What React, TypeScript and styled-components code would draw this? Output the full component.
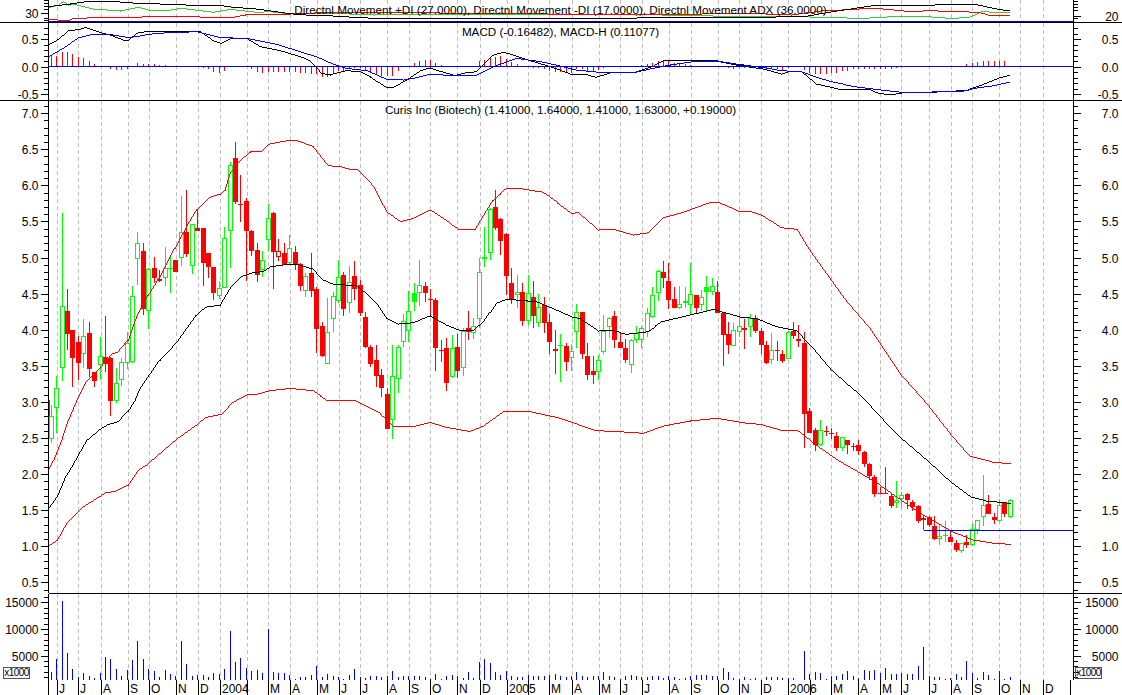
import React from "react";
import styled, { createGlobalStyle } from "styled-components";

type Kind = "r" | "g" | "G" | "o";
type Row = [number, number, number, number, Kind];
type Pt = [number, number];
type Tick = { y: number; major: boolean; label?: string };

const X0 = 51.3;
const STEP = 5.418;
const col = (x: number) => Math.round(x - 0.5) + 0.5;
const xOf = (i: number) => col(X0 + STEP * i);

/* Samples are stored in thirds of a pixel, relative to a base line */
const block = (y0: number, rows: Row[]): Row[] =>
  rows.map(([h, t, b, l, k]) => [y0 + h / 3, y0 + t / 3, y0 + b / 3, y0 + l / 3, k]);

const candles: Row[] = [
  ...block(180, [
    [675, 708, 778, 790, "g"], [588, 625, 685, 760, "g"], [100, 377, 565, 603, "g"], [328, 393, 461, 510, "r"],
    [450, 451, 533, 620, "r"], [468, 487, 548, 600, "r"], [418, 467, 523, 565, "g"], [427, 460, 566, 590, "r"],
    [576, 576, 602, 620, "r"], [472, 529, 555, 600, "g"], [408, 531, 551, 575, "r"], [530, 534, 662, 708, "r"],
    [565, 610, 662, 668, "g"], [535, 547, 601, 617, "g"], [455, 490, 549, 567, "g"], [318, 349, 547, 549, "g"],
    [156, 188, 238, 316, "g"], [190, 213, 386, 405, "r"], [265, 268, 394, 447, "g"], [232, 265, 293, 310, "r"],
    [270, 297, 302, 305, "r"], [201, 265, 295, 317, "g"], [225, 265, 267, 338, "G"], [240, 241, 275, 275, "r"],
    [48, 157, 235, 258, "g"], [30, 157, 221, 232, "r"], [133, 133, 259, 282, "g"], [88, 145, 152, 152, "r"],
    [145, 145, 248, 318, "r"], [220, 220, 261, 293, "r"], [260, 261, 338, 360, "r"], [303, 325, 347, 358, "g"],
    [142, 173, 325, 325, "g"], [-54, -45, 154, 263, "g"], [-114, -66, 65, 72, "r"], [-15, 72, 75, 125, "r"],
    [55, 63, 152, 302, "r"], [150, 153, 212, 228, "r"], [190, 210, 285, 305, "r"], [213, 241, 271, 292, "g"],
    [72, 115, 181, 212, "g"], [96, 100, 215, 326, "r"], [178, 214, 232, 243, "o"], [190, 220, 254, 254, "r"],
    [165, 205, 250, 255, "g"], [197, 216, 254, 270, "r"], [248, 252, 318, 332, "r"], [280, 287, 334, 350, "g"],
    [220, 279, 333, 350, "r"], [320, 327, 446, 520, "r"], [425, 438, 528, 530, "r"], [354, 457, 551, 553, "g"],
    [337, 349, 416, 455, "g"], [240, 292, 362, 370, "g"], [275, 285, 386, 408, "r"], [258, 307, 368, 398, "g"],
    [243, 288, 326, 360, "r"], [300, 315, 398, 408, "r"], [396, 412, 500, 505, "r"], [495, 501, 552, 560, "r"],
    [495, 540, 588, 620, "r"], [568, 585, 624, 652, "r"], [625, 642, 746, 746, "r"], [495, 589, 721, 778, "g"],
    [495, 502, 598, 638, "g"], [403, 424, 485, 500, "g"], [333, 394, 454, 487, "g"], [310, 340, 365, 392, "G"],
    [240, 316, 338, 377, "g"], [305, 318, 338, 365, "r"], [328, 357, 359, 405, "r"], [355, 360, 503, 572, "r"],
    [480, 510, 512, 545, "r"], [475, 504, 608, 632, "r"], [465, 505, 590, 595, "g"], [462, 501, 572, 595, "r"],
    [445, 454, 565, 588, "g"], [393, 445, 457, 480, "r"], [415, 439, 458, 477, "g"], [235, 275, 418, 445, "g"],
    [141, 232, 238, 262, "G"], [85, 88, 218, 240, "g"], [30, 82, 143, 150, "r"], [115, 117, 182, 225, "r"],
    [160, 163, 287, 345, "r"], [265, 310, 360, 372, "r"], [285, 337, 344, 385, "g"], [308, 337, 422, 437, "r"],
    [285, 340, 423, 435, "g"], [303, 351, 407, 443, "r"], [343, 382, 428, 440, "g"], [350, 375, 430, 460, "r"],
    [403, 426, 485, 522, "r"], [450, 508, 512, 582, "r"], [462, 495, 497, 605, "G"], [490, 498, 545, 573, "r"],
    [492, 514, 535, 573, "g"], [372, 397, 457, 503, "g"], [396, 396, 521, 538, "r"], [489, 528, 584, 600, "r"],
    [528, 573, 584, 613, "r"], [525, 541, 575, 600, "g"], [405, 452, 516, 522, "g"], [410, 415, 440, 473, "g"],
    [393, 408, 480, 505, "r"], [455, 486, 504, 504, "r"], [478, 503, 540, 548, "r"], [478, 481, 554, 578, "g"],
    [438, 458, 480, 490, "g"], [438, 445, 481, 503, "g"], [385, 400, 455, 470, "g"], [321, 346, 412, 414, "g"],
    [270, 274, 339, 362, "g"], [243, 276, 294, 324, "r"], [250, 303, 360, 386, "r"], [320, 357, 384, 384, "r"],
    [318, 371, 385, 387, "g"], [320, 362, 370, 385, "g"], [248, 343, 374, 403, "g"], [345, 346, 384, 403, "r"],
    [330, 352, 376, 393, "g"], [288, 322, 335, 395, "G"], [293, 319, 337, 345, "g"], [303, 336, 398, 400, "r"],
    [395, 398, 464, 558, "r"], [427, 463, 494, 522, "r"], [428, 451, 497, 497, "g"], [403, 439, 457, 470, "g"],
    [418, 443, 451, 507, "o"], [403, 415, 441, 470, "g"], [405, 417, 453, 458, "r"],
  ]),
  ...block(300, [
    [85, 93, 134, 162, "r"], [123, 135, 190, 192, "r"], [99, 151, 181, 191, "g"], [124, 150, 152, 182, "r"],
    [150, 162, 183, 188, "r"], [93, 96, 176, 178, "g"], [67, 93, 108, 117, "r"], [75, 118, 122, 140, "r"],
    [97, 129, 342, 443, "r"], [325, 333, 398, 400, "r"], [385, 390, 436, 452, "r"], [360, 391, 436, 438, "g"],
    [378, 394, 396, 408, "r"], [383, 399, 401, 418, "r"], [396, 408, 444, 452, "r"], [410, 412, 445, 453, "g"],
    [420, 420, 434, 462, "r"], [430, 438, 441, 452, "r"], [420, 435, 452, 465, "r"], [454, 456, 493, 502, "r"],
    [488, 492, 528, 540, "r"], [525, 531, 582, 590, "r"], [560, 578, 581, 582, "r"], [501, 578, 581, 582, "r"],
    [578, 588, 617, 623, "r"], [544, 599, 610, 625, "g"], [575, 586, 596, 625, "g"], [580, 582, 600, 628, "r"],
    [600, 606, 620, 632, "r"], [615, 618, 664, 670, "r"], [645, 654, 661, 690, "r"], [648, 651, 675, 682, "r"],
    [648, 678, 716, 720, "r"], [675, 709, 718, 735, "g"], [662, 706, 709, 725, "G"], [690, 711, 725, 725, "r"],
    [720, 729, 750, 756, "r"], [728, 730, 752, 758, "g"], [705, 725, 735, 745, "r"], [672, 686, 736, 738, "g"],
    [660, 661, 691, 703, "g"], [525, 616, 652, 678, "g"], [585, 612, 641, 642, "r"], [640, 651, 659, 671, "r"],
    [598, 616, 662, 665, "g"], [605, 610, 642, 650, "r"], [598, 601, 652, 654, "g"],
  ]),
];

const upperBand: Pt[] = [[48.7,469],[54,459],[62,439],[68.3,420],[78.3,397],[85,383],[93.3,375],[111.7,354],[118.3,351.7],[128.3,340],[136.7,316.7],[148.3,295],[160,276.7],[175,248],[188.3,223.3],[197.3,209],[210,197],[220,194],[225,190],[230,173],[240,160],[250,152],[261.7,151],[268.3,144.3],[278.3,142.3],[290,140.3],[296.7,140.3],[313,146.7],[328,165.7],[340,166.7],[350,169.3],[358.3,170],[368,180],[374,187.7],[386.7,211.7],[400,221.7],[413,218.3],[430,210],[450,223.3],[458.3,229.3],[475,229.3],[493.3,200],[506.7,188.3],[516.7,188],[543.3,192.3],[571.7,213.3],[578.3,212.7],[598.3,230],[613.3,229.3],[633.3,235],[648.3,232.7],[663.3,217.7],[683.3,212.3],[710,202.3],[718.3,202.3],[738.3,211],[750,211],[761.3,215],[781.3,227.7],[797.3,229.3],[810,250],[846,300],[870,328],[900,373],[926.7,403],[951.7,435],[970,456],[993.3,462.3],[1010,463.7]];

const middleBand: Pt[] = [[48.7,508.7],[57.3,496.7],[66.7,475],[72.7,465],[76,459.3],[86.7,440.7],[101.7,428.3],[108.3,424.3],[118.3,421.7],[128.3,411],[135,400],[140,388.3],[160,360],[176.7,342.3],[196.7,315],[205,307.3],[220,305],[230,288.3],[241.7,276.7],[253.3,272.3],[263.3,271.7],[270,266.7],[280,265.3],[296.7,264],[313.3,269.3],[323.3,280],[333.3,284.3],[356.7,285.7],[366.7,293.3],[376.7,303.3],[386.7,318.3],[398.3,324],[413.3,322.7],[430,315.7],[446.7,325],[460,330.7],[473.3,330],[483.3,321.7],[496.7,303.3],[506.7,299.3],[536.7,301.7],[556.7,310],[573.3,317.7],[580,318.3],[598.3,331],[613.3,330.7],[626.7,334.3],[648.3,331.7],[661.7,321.7],[683.3,316.7],[713.3,309.3],[723.3,312.3],[741.7,317.3],[756.7,318.5],[776.7,326.7],[796.7,330.7],[810,345],[830,368.3],[848.3,385],[860,395],[886.7,423.3],[903.3,440],[930,463.3],[950,481.7],[970,496.7],[986.7,501],[1010,503.3]];

const lowerBand: Pt[] = [[48.7,546.3],[57.3,540],[66.7,523.3],[83.3,506.7],[106,492.3],[115,491.7],[128.3,485],[138.3,470],[146.7,465],[176.7,439.3],[196.7,425],[205,417.7],[221.7,414.3],[231.7,403.3],[246.7,395],[256.7,394.3],[270,390.7],[290,388.3],[313.3,390.7],[326.7,400],[356.7,401],[380,413.3],[393.3,426],[413.3,426.7],[430,422.3],[446.7,427.3],[470,431.7],[483.3,426],[503.3,411.7],[516.7,411],[530,411.7],[560,418.3],[596.7,430.7],[620,431.7],[643.3,433.3],[663.3,426],[690,421],[716.7,418.3],[746.7,423.3],[760,424.3],[780,430],[798.3,431],[820,448.3],[840,461.7],[860,473.3],[880,485],[903.3,501.7],[923.3,515],[950,530.7],[973.3,540],[993.3,543.3],[1010,544.3]];

const macdLine: Pt[] = [[48.7,45],[58,39.3],[68,30.7],[80,29.3],[85,27.3],[100,32.7],[113,36],[123.3,40],[128.3,40],[138.3,32.3],[148.3,31.7],[200,31.7],[213,40.7],[221.7,43.3],[231.7,38.3],[246.7,38.3],[260,46.7],[280,50.7],[300,56.7],[310,61],[321.7,73.3],[330,75],[346.7,70.7],[360,71.7],[370,76.7],[386.7,87.3],[393.3,87.3],[406.7,80],[420,70.7],[430,67.7],[441.7,71.7],[455,75.7],[466.7,72.7],[476.7,71.7],[493.3,55],[503.3,52.3],[513.3,55],[530,60.7],[550,66.7],[570,74],[583.3,74],[596.7,77.3],[610,72.7],[633.3,72.7],[653.3,66],[663.3,60.7],[713.3,60],[720,61.7],[736.7,65],[748,66.7],[764.7,69.3],[781.3,74],[788,71.7],[801.3,71.7],[816.3,84],[838,89],[868,89],[878,93.3],[891.3,94.7],[904.7,92.7],[920,92.2],[945,91.9],[968,90],[981.3,85],[998,78.3],[1009.7,75.3]];

const macdSignal: Pt[] = [[48.7,56.7],[63.3,48.3],[78.3,37.7],[93.3,34.3],[110,34.3],[128.3,37.7],[156.7,33.3],[196.7,31.7],[220,37.7],[246.7,38.3],[276.7,44.3],[300,51.7],[316.7,56.7],[333.3,64.3],[346.7,68.3],[366.7,70.7],[370,71.7],[386.7,79.3],[403.3,80],[413.3,78.3],[430,74],[443.3,75],[476.7,75],[493.3,66.7],[516.7,58.3],[540,61.7],[560,66],[576.7,70],[603.3,72.7],[633.3,72.7],[653.3,68.3],[670,65],[693.3,61.7],[716.7,61],[736.7,64],[748,65.7],[768,68.3],[781.3,70.7],[801.3,71.7],[816.3,77.3],[831.3,81.7],[854.7,86.7],[881.3,90],[901.3,92.3],[961.3,91.7],[974.7,88.3],[991.3,86],[1009.7,82.3]];

const histogram: number[] = [
  10.7,10.7,15,15,12.7,10,8.3,5.7,2.7,1,0,-2.3,-3.3,-3.3,-2.3,0,4,2.7,2.7,2.7,1.7,1.7,.7,0,.7,0,0,-.7,-1.3,-2.3,
  -5.3,-6,-4.3,0,0,0,-.7,-2.3,-5,-6,-5.3,-5.3,-5.3,-5.3,-5.3,-5.3,-6.3,-6.3,-7.3,-7.7,-10,-10,-7.3,-4,-4,-2.3,-1,-1.7,-3.3,
  -4.3,-7.3,-9.3,-9.3,-9.3,-4,0,.7,3.3,5.7,6.7,6.7,4,1.7,.7,0,0,0,0,0,5.7,6.7,9.3,10,10.7,7.3,5,2.3,.7,-.3,-1,-1.7,-2.3,-4,-5,-5.3,-6.7,-6.7,-2.7,-2.7,-4.3,-4.3,-3.3,-1,
  0,0,0,0,0,0,1.3,2.3,4,6,6,6,4,3.3,2.7,1.7,1,.7,.3,.3,0,0,-1.7,-2.3,-1.7,-1.3,-1.3,-1,-1,
  -1.3,-2,-2.7,-3.3,-1.3,0,0,-3.3,-6,-7.3,-7.3,-7.3,-6,-6,-4.3,-4,-2.7,-2,-2,-2.3,-2.7,-2,-2,-2,-1,-.3,0,
  0,0,0,0,0,0,0,0,0,.3,2.7,4,4.7,5.3,5.3,5.7,5.3,5.3,
];

const volume: number[] = [
  ...[620,582,408,565,612,636,624,633,639,623,577,581,612,632,615,585,528,582,612,618,636,615,628,633,528,597,633,630,630,636,624,627,612,498,591,579,609,618,615,624,492,621,624,624,630,642,636,636,630,603,636,627,633,636,642,630,612,636,639].map((z) => (645 - z) / 3),
  ...[258,258,260,258,243,260,258,258,258,258,260,268,252,267,258,256,258,264,246,265,215,207,218,245,255,243,258,260,260,255,258,258,258,255,252,258,262,258,246,258,260,258,258,246,258,260,268,258,256,258,262,262,258,258,263,258,262,268,264,258,256,256,256,258,258,235,245,265,268,262,268,265].map((z) => (270 - z) / 3),
  ...[645,637,635,635,640,640,640,645,558,626,622,624,642,633,632,627,618,632,640,615,618,615,623,610,626,628,625,627,628,603,546,633,636,636,642,640,628,636,588,624,638,621,630,642,618,642,636].map((z) => (645 - z) / 3),
];

const adxLine: Pt[] = [[48.7,6.7],[70,4],[83.3,2],[106.7,1],[133.3,3],[160,4],[186.7,5],[216.7,5],[233.3,7.3],[256.7,9],[290,13.7],[306.7,15],[333.3,16],[353.3,17.3],[374,18.3],[503,18.3],[636,18],[748,17.3],[804.7,16.7],[828,12.3],[848,9.3],[868,6.3],[884.7,5],[928,5.3],[951.3,4.3],[974.7,4.3],[998,9.3],[1009.7,10.7]];
const plusDi: Pt[] = [[48.7,7.7],[58.3,5],[63.3,1.3],[68.3,5],[75,4.3],[93.3,9],[120,11],[138.3,7.3],[148.3,10],[166.7,10.7],[181.7,8.3],[213.3,12.3],[230,9.3],[256.7,12.3],[270,11.7],[290,14],[333.3,13.3],[374,15],[503,14.5],[636,14.5],[748,16.7],[798,16.7],[858,18.3],[881.3,17.7],[894.7,16],[928,16.7],[948,18.3],[968,17.7],[983,11],[991.3,12.3],[1009.7,12.3]];
const minusDi: Pt[] = [[48.7,19.3],[68.3,20.7],[73.3,18.3],[116.7,17.3],[166.7,16.7],[233.3,17.3],[245,15],[266.7,14.7],[290,14],[333.3,12.3],[374,12.3],[440,13],[503,13.5],[636,15],[748,13.3],[791.3,15],[828,10],[841.3,10],[871.3,8.3],[888,9.3],[911.3,11.7],[928,10.7],[978,12.3],[988,15],[1009.7,15.7]];

const dates: [number, string][] = [
  [57,"J"],[78,"J"],[101,"A"],[128,"S"],[149,"O"],[176,"N"],[198,"D"],[220,"2004"],[247,""],[268,"M"],[290,"A"],[317,"M"],[339,"J"],[360,"J"],
  [387,"A"],[409,"S"],[430,"O"],[457,"N"],[480,"D"],[507,"2005"],[528,""],[549,"M"],[572,"A"],[599,"M"],[620,"J"],[642,"J"],[669,"A"],[691,"S"],
  [718,"O"],[739,"N"],[761,"D"],[788,"2006"],[810,""],[831,"M"],[858,"A"],[880,"M"],[901,"J"],[929,"J"],[951,"A"],[972,"S"],[999,"O"],[1020,"N"],[1043,"D"],
];

const range = (a: number, b: number) => Array.from({ length: b - a + 1 }, (_, i) => a + i);
const priceTicks: Tick[] = range(3, 71).map((k) => ({
  y: 618.5 - 7.22 * k,
  major: k % 5 === 0,
  label: k % 5 === 0 && k <= 70 ? (k / 10).toFixed(1) : undefined,
}));
const macdTicks: Tick[] = range(-6, 8).map((k) => ({
  y: 66.7 - 5.53 * k,
  major: k % 5 === 0,
  label: k % 5 === 0 ? (k / 10).toFixed(1) : undefined,
}));
const volumeTicks: Tick[] = range(1, 16).map((k) => ({
  y: 682.4 - 5.333 * k,
  major: k % 5 === 0,
  label: k % 5 === 0 ? String(k * 1000) : undefined,
}));
const adxLeft: Tick[] = [
  ...[0, 3, 6, 9, 18, 20].map((y) => ({ y, major: false })),
  { y: 13, major: true, label: "30" },
];
const adxRight: Tick[] = [
  ...[1, 4, 7, 10, 18].map((y) => ({ y, major: false })),
  { y: 16, major: true, label: "20" },
];

/* One-pixel stepped trace, like the bitmap plot of the original */
const tracePath = (points: Pt[]) => {
  const seen = new Set<string>();
  let d = "";
  for (let s = 0; s < points.length - 1; s++) {
    const [x0, y0] = points[s];
    const [x1, y1] = points[s + 1];
    const n = Math.max(1, Math.ceil(Math.max(Math.abs(x1 - x0), Math.abs(y1 - y0))));
    for (let k = 0; k <= n; k++) {
      const px = Math.floor(x0 + ((x1 - x0) * k) / n);
      const py = Math.floor(y0 + ((y1 - y0) * k) / n);
      const key = `${px},${py}`;
      if (!seen.has(key)) {
        seen.add(key);
        d += `M${px} ${py}h1v1h-1z`;
      }
    }
  }
  return d;
};

const GlobalStyle = createGlobalStyle`
  html, body { margin: 0; padding: 0; background: #fff; }
`;

const Page = styled.div`
  width: 1122px;
  height: 695px;
  display: flex;
  flex-direction: column;
  overflow: hidden;
  background: #fff;
  color: #000;
  font-family: "Liberation Sans", Arial, sans-serif;
`;

const Panel = styled.section<{ $height: number }>`
  position: relative;
  flex: none;
  height: ${(p) => p.$height}px;
`;

const Rule = styled.div<{ $inset?: number }>`
  flex: none;
  height: 1px;
  margin-left: ${(p) => p.$inset ?? 0}px;
  background: #000;
`;

const Plot = styled.svg`
  display: block;
  width: 100%;
  height: 100%;
  overflow: visible;
  shape-rendering: crispEdges;
  text {
    font-family: "Liberation Sans", Arial, sans-serif;
    font-size: 12px;
    fill: #000;
  }
`;

const Title = styled.div<{ $top: number }>`
  position: absolute;
  top: ${(p) => p.$top}px;
  left: 48px;
  right: 49px;
  font-size: 11.7px;
  line-height: 14px;
  text-align: center;
  white-space: nowrap;
`;

const ScaleBadge = styled.div<{ $left: number }>`
  position: absolute;
  left: ${(p) => p.$left}px;
  top: 73px;
  width: 27px;
  height: 12px;
  box-sizing: border-box;
  border: 1px solid #555;
  font-size: 10px;
  letter-spacing: -0.5px;
  line-height: 10px;
  text-align: center;
`;

const Grid = ({ y0, y1 }: { y0: number; y1: number }) => (
  <g stroke="#c0c0c0" strokeDasharray="4 3">
    {dates.map(([x]) => (
      <line key={x} x1={x + 0.5} x2={x + 0.5} y1={y0} y2={y1} />
    ))}
  </g>
);

const Scale = ({ ticks, side, y0, y1 }: { ticks: Tick[]; side: "left" | "right"; y0: number; y1: number }) => {
  const left = side === "left";
  const ax = left ? 48.5 : 1073.5;
  const dir = left ? -1 : 1;
  return (
    <g>
      <line x1={ax} x2={ax} y1={y0} y2={y1} stroke="#000" />
      {ticks.map((t) => {
        const y = Math.round(t.y) + 0.5;
        return (
          <g key={t.y}>
            <line x1={ax} x2={ax + dir * (t.major ? 7.5 : 4.5)} y1={y} y2={y} stroke="#000" />
            {t.label && (
              <text x={left ? 38.5 : 1118.5} y={y + 4.5} textAnchor="end">
                {t.label}
              </text>
            )}
          </g>
        );
      })}
    </g>
  );
};

const Curve = ({ points, color }: { points: Pt[]; color: string }) => <path fill={color} d={tracePath(points)} />;

const Candle = ({ row, index }: { row: Row; index: number }) => {
  const [hi, top, bot, lo, kind] = row;
  const x = xOf(index);
  const solid = kind === "r" || kind === "G";
  const stroke = kind === "g" || kind === "G" ? "#00ff00" : "#ff0000";
  const yt = Math.round(top);
  const yb = Math.max(Math.round(bot), yt + 1);
  return (
    <g>
      <line x1={x} x2={x} y1={Math.round(hi)} y2={Math.round(lo)} stroke={stroke} />
      {solid ? (
        <rect x={x - 2.5} y={yt} width={5} height={yb - yt} fill={stroke} />
      ) : (
        <rect x={x - 2} y={yt + 0.5} width={4} height={Math.max(yb - yt - 1, 1)} fill="#fff" stroke={stroke} />
      )}
    </g>
  );
};

export default function App() {
  return (
    <Page>
      <GlobalStyle />

      <Panel $height={22}>
        <Plot viewBox="0 0 1122 22">
          <Grid y0={0} y1={22} />
          <Curve points={plusDi} color="#33cc33" />
          <Curve points={minusDi} color="#ff0000" />
          <Curve points={adxLine} color="#000" />
          <line x1={48} x2={1073} y1={21.5} y2={21.5} stroke="#0000cc" />
          <Scale ticks={adxLeft} side="left" y0={0} y1={22} />
          <Scale ticks={adxRight} side="right" y0={0} y1={22} />
        </Plot>
        <Title $top={3}>
          Directnl Movement +DI (27.0000), Directnl Movement -DI (17.0000), Directnl Movement ADX (36.0000)
        </Title>
      </Panel>
      <Rule />

      <Panel $height={77}>
        <Plot viewBox="0 23 1122 77">
          <Grid y0={23} y1={100} />
          {histogram.map((h, i) => (
            <line key={i} x1={xOf(i)} x2={xOf(i)} y1={66.5} y2={66.5 - h} stroke="#ff0000" />
          ))}
          <Curve points={macdLine} color="#000" />
          <Curve points={macdSignal} color="#0000ff" />
          <line x1={48} x2={1073} y1={66.5} y2={66.5} stroke="#0000ff" />
          <Scale ticks={macdTicks} side="left" y0={23} y1={100} />
          <Scale ticks={macdTicks} side="right" y0={23} y1={100} />
        </Plot>
        <Title $top={2}>MACD (-0.16482), MACD-H (0.11077)</Title>
      </Panel>
      <Rule />

      <Panel $height={492}>
        <Plot viewBox="0 101 1122 492">
          <Grid y0={101} y1={593} />
          <line x1={49.5} x2={49.5} y1={400} y2={416} stroke="#ff0000" />
          {candles.map((row, i) => (
            <Candle key={i} row={row} index={i} />
          ))}
          <Curve points={upperBand} color="#ff0000" />
          <Curve points={lowerBand} color="#ff0000" />
          <Curve points={middleBand} color="#000" />
          <line x1={924} x2={1073} y1={530.5} y2={530.5} stroke="#0000ff" />
          <Scale ticks={priceTicks} side="left" y0={101} y1={593} />
          <Scale ticks={priceTicks} side="right" y0={101} y1={593} />
        </Plot>
        <Title $top={2}>Curis Inc (Biotech) (1.41000, 1.64000, 1.41000, 1.63000, +0.19000)</Title>
      </Panel>
      <Rule $inset={49} />

      <Panel $height={101}>
        <Plot viewBox="0 594 1122 101">
          <Grid y0={594} y1={680} />
          {volume.map((h, i) => (
            <line key={i} x1={xOf(i)} x2={xOf(i)} y1={680} y2={680 - h} stroke="#0000ff" />
          ))}
          <Scale ticks={volumeTicks} side="left" y0={594} y1={695} />
          <Scale ticks={volumeTicks} side="right" y0={594} y1={680} />
          {dates.map(([x, label]) => (
            <g key={x}>
              <line x1={x + 0.5} x2={x + 0.5} y1={680} y2={695} stroke="#000" />
              <text x={x + 2} y={693}>
                {label}
              </text>
            </g>
          ))}
          <line x1={1070.5} x2={1070.5} y1={680} y2={695} stroke="#000" />
        </Plot>
        <ScaleBadge $left={3}>x1000</ScaleBadge>
        <ScaleBadge $left={1075}>x1000</ScaleBadge>
      </Panel>
    </Page>
  );
}
